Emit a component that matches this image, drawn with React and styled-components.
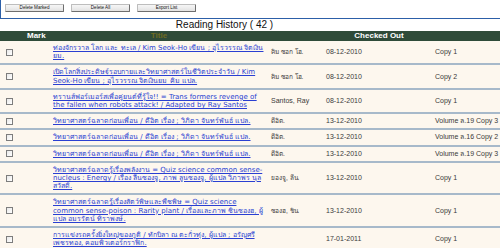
import React from "react"
import styled, { createGlobalStyle } from "styled-components"

const Global = createGlobalStyle`
    body {
        margin: 0;
        background: #fff;
        font-family: "Liberation Sans", Arial, sans-serif;
        overflow: hidden;
    }
`

const Page = styled.div`
    width: 500px;
    background: #fdf7ee;
`
const Toolbar = styled.div`
    height: 19px;
    display: flex;
    gap: 7px;
    padding: 4px 0 0 4px;
    box-sizing: border-box;
    background: #fff;
    border-left: 1px solid #2c5fa8;
    border-bottom: 1px solid #2c5fa8;
`
const Btn = styled.button`
    width: 59px;
    height: 8px;
    padding: 0;
    margin: 0;
    font-family: "Liberation Sans", Arial, sans-serif;
    font-size: 4.6px;
    line-height: 6px;
    color: #111;
    background: linear-gradient(#f6f6f6, #e2e2e2);
    border: 1px solid #6e6e6e;
    border-top-color: #bdbdbd;
    border-left-color: #bdbdbd;
    border-radius: 1px;
`
const Caption = styled.div`
    height: 12px;
    line-height: 12px;
    font-size: 10px;
    color: #111;
    text-align: center;
    padding-right: 51px;
    background: #fff;
`
const Grid = styled.div`
    display: grid;
    grid-template-columns: 50px 218px 55px 109px 1fr;
`
const HeadRow = styled(Grid)`
    height: 10px;
    line-height: 10px;
    background: #2f4b39;
    font-size: 8px;
    font-weight: bold;
    color: #fff;
`
const HeadCell = styled.div`
    padding-left: ${p => p.$pad || 0}px;
    text-align: ${p => p.$center ? "center" : "left"};
    color: ${p => p.$olive ? "#6e6b22" : "#fff"};
    grid-column: ${p => p.$span || "auto"};
    padding-right: ${p => p.$right || 0}px;
    white-space: nowrap;
`
const Row = styled(Grid)`
    border-top: ${p => p.$first ? "none" : "2px solid #a7b9ca"};
    font-size: 7px;
    line-height: 8.2px;
    color: #3a3a3a;
`
const CheckCell = styled.div`
    display: flex;
    align-items: center;
    padding-left: 6px;
`
const Box = styled.span`
    width: 5px;
    height: 5px;
    border: 1px solid #7d7d7d;
    background: linear-gradient(135deg, #e9e9e9, #fff);
`
const TitleCell = styled.div`
    padding: 3px 2px 3px 3px;
    font-family: "DejaVu Sans", Verdana, sans-serif;
    font-size: 7px;
    line-height: 8.2px;
`
const Link = styled.a`
    color: #2a3fd2;
    text-decoration: underline;
`
const Cell = styled.div`
    align-self: center;
    padding-left: 3px;
    white-space: nowrap;
    font-size: ${p => p.$small ? "6.5px" : "7px"};
`

const science = "วิทยาศาสตร์ฉลาดก่อนเพื่อน / ดีอิต เรื่อง ; วิภิดา จันทร์พันธ์ แปล."

const rows = [
    { title: "ท่องจักรวาล โลก และ ทะเล / Kim Seok-Ho เขียน ; อุไรวรรณ จิตเงินยม.", author: "คิม ซอก โฮ.", date: "08-12-2010", copy: "Copy 1" },
    { title: "เปิดโลกสิ่งประดิษฐ์รอบกายและวิทยาศาสตร์ในชีวิตประจำวัน / Kim Seok-Ho เขียน ; อุไรวรรณ จิตเงินยม คิม แปล.", author: "คิม ซอก โฮ.", date: "08-12-2010", copy: "Copy 2" },
    { title: "ทรานส์ฟอร์เมอร์สเพื่อคู่ยนต์ที่รู้ใจ!! = Trans formers revenge of the fallen when robots attack! / Adapted by Ray Santos", author: "Santos, Ray", date: "08-12-2010", copy: "Copy 1", latin: true },
    { title: science, author: "ดีอิต.", date: "13-12-2010", copy: "Volume ล.19 Copy 3" },
    { title: science, author: "ดีอิต.", date: "13-12-2010", copy: "Volume ล.16 Copy 2" },
    { title: science, author: "ดีอิต.", date: "13-12-2010", copy: "Volume ล.19 Copy 3" },
    { title: "วิทยาศาสตร์ฉลาดรู้เรื่องพลังงาน = Quiz science common sense-nucleus : Energy / เรื่อง ลีนซองจู, ภาพ ลูนซองจู, ผู้แปล วิภาพร นุลสวัสดิ์.", author: "ยองจู, ลีน.", date: "13-12-2010", copy: "Copy 1" },
    { title: "วิทยาศาสตร์ฉลาดรู้เรื่องสัตว์พิษและพืชพิษ = Quiz science common sense-poison : Rarity plant / เรื่องและภาพ ชินซองฮ, ผู้แปล อมรรัตน์ ทิราพงษ์.", author: "ซองฮ, ชิน.", date: "13-12-2010", copy: "Copy 1" },
    { title: "การแข่งรถครั้งยิ่งใหญ่ของภูติ / ทักบิลา ณ ตะกั่วทุ่ง, ผู้แปล ; อรัญศรี เพชรทอง, คอมพิวเตอร์กราฟิก.", author: "", date: "17-01-2011", copy: "Copy 1" },
]

export default function App() {
    return (
        <Page>
            <Global />
            <Toolbar>
                <Btn>Delete Marked</Btn>
                <Btn>Delete All</Btn>
                <Btn>Export List</Btn>
            </Toolbar>
            <Caption>Reading History ( 42 )</Caption>
            <HeadRow>
                <HeadCell $pad={27}>Mark</HeadCell>
                <HeadCell $center $olive>Title</HeadCell>
                <HeadCell $center $span="3 / 6" $right={10}>Checked Out</HeadCell>
            </HeadRow>
            {rows.map((r, i) => (
                <Row key={i} $first={i === 0}>
                    <CheckCell><Box /></CheckCell>
                    <TitleCell><Link href="#">{r.title}</Link></TitleCell>
                    <Cell $small={!r.latin}>{r.author}</Cell>
                    <Cell>{r.date}</Cell>
                    <Cell>{r.copy}</Cell>
                </Row>
            ))}
        </Page>
    )
}
